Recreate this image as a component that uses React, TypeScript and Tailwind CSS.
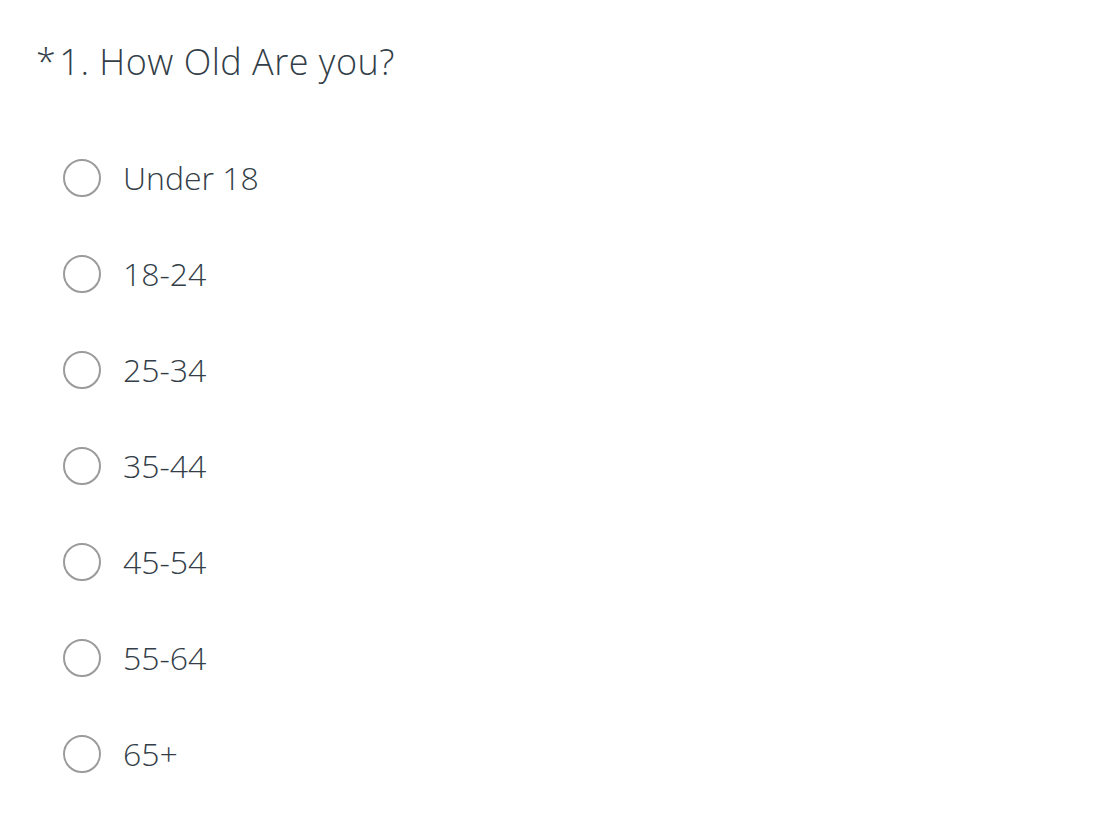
const OPTIONS = ["Under 18", "18-24", "25-34", "35-44", "45-54", "55-64", "65+"];

export default function App() {
  return (
    <div
      className="min-h-screen bg-white pt-[38px] pl-[36px] text-[#333e48]"
      style={{ fontFamily: "'Open Sans', 'Liberation Sans', sans-serif" }}
    >
      <h1 className="flex h-[48px] items-center text-[36px] font-light leading-none tracking-[0.5px]">
        <span className="mr-[3px]">*</span>
        <span>1. How Old Are you?</span>
      </h1>
      <fieldset className="mt-[44px] ml-[27px]">
        {OPTIONS.map((opt) => (
          <label key={opt} className="flex h-[96px] cursor-pointer items-center">
            <input type="radio" name="age" value={opt} className="peer sr-only" />
            <span className="h-[38px] w-[38px] shrink-0 rounded-full border-2 border-[#9b9b9b] bg-white" />
            <span className="ml-[22px] text-[32px] font-light leading-none">{opt}</span>
          </label>
        ))}
      </fieldset>
    </div>
  );
}
